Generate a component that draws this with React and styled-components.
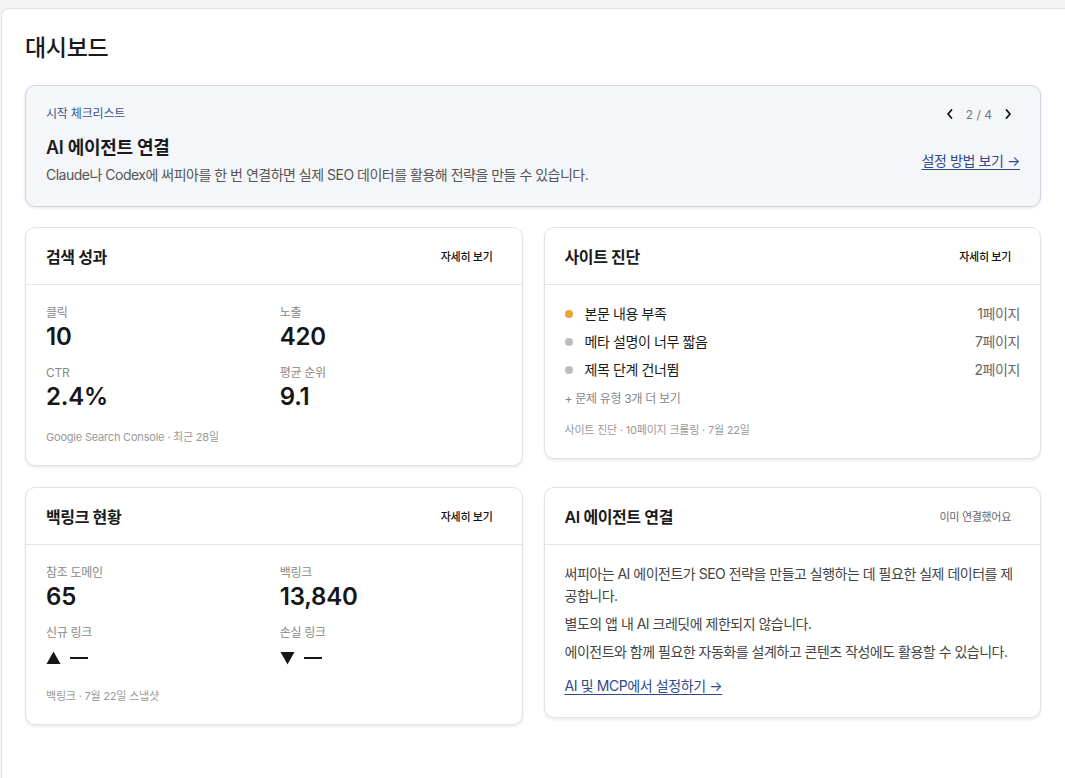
import React from "react";
import styled, { createGlobalStyle } from "styled-components";

const Global = createGlobalStyle`
  html, body { margin: 0; padding: 0; background: #f3f3f3; }
  body { font-family: "Inter", "Noto Sans CJK KR", sans-serif; color: #1a1a1a; -webkit-font-smoothing: antialiased; }
  * { box-sizing: border-box; }
`;

const Page = styled.div`
  padding-top: 8px;
  padding-left: 1px;
  height: 778px;
  overflow: hidden;
`;

const Panel = styled.main`
  background: #fff;
  border: 1px solid #e3e3e3;
  border-right: none;
  border-radius: 8px 0 0 0;
  min-height: 780px;
  padding: 24px 24px 24px 23px;
`;

const Heading = styled.h1`
  margin: 0 0 22px;
  font-size: 23px;
  line-height: 30px;
  font-weight: 500;
  letter-spacing: -0.3px;
`;

const Banner = styled.section`
  background: #f4f6fa;
  border: 1px solid #cdd4e2;
  border-radius: 10px;
  box-shadow: 0 1px 3px rgba(30, 40, 70, 0.12);
  padding: 20px 20px 21px 20px;
  display: flex;
  flex-direction: column;
  gap: 14px;
  margin-bottom: 20px;
`;

const BannerTop = styled.div`
  display: flex;
  justify-content: space-between;
  align-items: center;
  height: 16px;
`;

const Eyebrow = styled.span`
  font-size: 12px;
  line-height: 16px;
  color: #3a5693;
  letter-spacing: -0.2px;
`;

const Pager = styled.div`
  display: flex;
  align-items: center;
  gap: 4px;
  font-size: 12px;
  color: #777;
`;

const PagerBtn = styled.button`
  border: none;
  background: none;
  padding: 0;
  width: 24px;
  height: 24px;
  display: flex;
  align-items: center;
  justify-content: center;
  color: #111;
  cursor: pointer;
`;

const BannerBody = styled.div`
  display: flex;
  justify-content: space-between;
  align-items: center;
`;

const BannerTitle = styled.h2`
  margin: 0 0 5px;
  font-size: 18px;
  line-height: 24px;
  font-weight: 600;
  letter-spacing: -0.3px;
`;

const BannerText = styled.p`
  margin: 0;
  font-size: 14px;
  line-height: 20px;
  color: #555;
  letter-spacing: -0.5px;
`;

const LinkText = styled.a`
  font-size: 14px;
  line-height: 20px;
  color: #2c4a8c;
  text-decoration: underline;
  text-underline-offset: 3px;
  letter-spacing: -0.4px;
  cursor: pointer;
  white-space: nowrap;
`;

const Grid = styled.div`
  display: grid;
  grid-template-columns: 1fr 1fr;
  gap: 21px 21px;
  align-items: start;
`;

const Card = styled.section`
  background: #fff;
  border: 1px solid #e2e2e2;
  border-radius: 10px;
  box-shadow: 0 2px 3px rgba(0, 0, 0, 0.08);
`;

const CardHeader = styled.header`
  display: flex;
  align-items: center;
  justify-content: space-between;
  height: 57px;
  padding: 0 20px;
  border-bottom: 1px solid #e4e4e4;
`;

const CardTitle = styled.h3`
  margin: 0;
  font-size: 16px;
  font-weight: 600;
  letter-spacing: -0.4px;
`;

const HeaderButton = styled.button`
  border: none;
  background: none;
  padding: 6px 9px;
  font-family: inherit;
  font-size: 11px;
  font-weight: ${(p) => (p.$muted ? 400 : 500)};
  color: ${(p) => (p.$muted ? "#666" : "#111")};
  letter-spacing: -0.3px;
  cursor: pointer;
`;

const CardBody = styled.div`
  padding: ${(p) => p.$pad || "20px 20px 20px"};
`;

const Stats = styled.div`
  display: grid;
  grid-template-columns: 1fr 1fr;
  row-gap: 12px;
  column-gap: 12px;
`;

const Stat = styled.div`
  display: flex;
  flex-direction: column;
`;

const StatLabel = styled.span`
  font-size: 12px;
  line-height: 16px;
  color: #888;
  letter-spacing: -0.3px;
`;

const StatValue = styled.span`
  font-size: 24px;
  line-height: 32px;
  font-weight: 600;
  color: #161616;
  letter-spacing: -0.2px;
  display: flex;
  align-items: center;
  gap: 9px;
  height: ${(p) => (p.$tall ? "34px" : "32px")};
`;

const Footnote = styled.p`
  margin: ${(p) => p.$mt || "16px"} 0 0;
  font-size: 11px;
  line-height: 16px;
  color: #999;
  letter-spacing: -0.2px;
`;

const IssueList = styled.ul`
  list-style: none;
  margin: 0;
  padding: 0;
  display: flex;
  flex-direction: column;
  gap: 8px;
`;

const Issue = styled.li`
  display: flex;
  align-items: center;
  font-size: 14px;
  line-height: 20px;
  letter-spacing: -0.4px;
`;

const Dot = styled.span`
  width: 8px;
  height: 8px;
  border-radius: 50%;
  background: ${(p) => p.$color};
  margin-right: 12px;
  flex: none;
`;

const IssueName = styled.span`
  flex: 1;
  color: #1a1a1a;
`;

const IssueCount = styled.span`
  color: #666;
`;

const MoreLink = styled.div`
  margin-top: 11px;
  font-size: 12px;
  line-height: 16px;
  color: #888;
  letter-spacing: -0.3px;
`;

const Para = styled.p`
  margin: 0 0 6px;
  font-size: 14px;
  line-height: 22px;
  color: #444;
  letter-spacing: -0.5px;
`;

const BodyLink = styled(LinkText)`
  display: inline-block;
  margin-top: 7px;
`;

const Triangle = ({ down }) => (
  <svg width="15" height="14" viewBox="0 0 15 14">
    {down ? (
      <path d="M0.5 1 H14.5 L7.5 13.5 Z" fill="#161616" />
    ) : (
      <path d="M7.5 0.5 L14.5 13 H0.5 Z" fill="#161616" />
    )}
  </svg>
);

const Dash = styled.span`
  display: inline-block;
  width: 18px;
  height: 2.5px;
  background: #161616;
`;

const Chevron = ({ left }) => (
  <svg width="12" height="12" viewBox="0 0 12 12" fill="none">
    <path
      d={left ? "M7.5 2 L4 6 L7.5 10" : "M4.5 2 L8 6 L4.5 10"}
      stroke="#111"
      strokeWidth="1.8"
      strokeLinecap="round"
      strokeLinejoin="round"
    />
  </svg>
);

export default function App() {
  return (
    <>
      <Global />
      <Page>
        <Panel>
          <Heading>대시보드</Heading>
          <Banner>
            <BannerTop>
              <Eyebrow>시작 체크리스트</Eyebrow>
              <Pager>
                <PagerBtn aria-label="이전">
                  <Chevron left />
                </PagerBtn>
                <span>2 / 4</span>
                <PagerBtn aria-label="다음">
                  <Chevron />
                </PagerBtn>
              </Pager>
            </BannerTop>
            <BannerBody>
              <div>
                <BannerTitle>AI 에이전트 연결</BannerTitle>
                <BannerText>
                  Claude나 Codex에 써피아를 한 번 연결하면 실제 SEO 데이터를 활용해 전략을 만들 수 있습니다.
                </BannerText>
              </div>
              <LinkText>설정 방법 보기 →</LinkText>
            </BannerBody>
          </Banner>

          <Grid>
            <Card>
              <CardHeader>
                <CardTitle>검색 성과</CardTitle>
                <HeaderButton>자세히 보기</HeaderButton>
              </CardHeader>
              <CardBody>
                <Stats>
                  <Stat>
                    <StatLabel>클릭</StatLabel>
                    <StatValue>10</StatValue>
                  </Stat>
                  <Stat>
                    <StatLabel>노출</StatLabel>
                    <StatValue>420</StatValue>
                  </Stat>
                  <Stat>
                    <StatLabel>CTR</StatLabel>
                    <StatValue>2.4%</StatValue>
                  </Stat>
                  <Stat>
                    <StatLabel>평균 순위</StatLabel>
                    <StatValue>9.1</StatValue>
                  </Stat>
                </Stats>
                <Footnote>Google Search Console · 최근 28일</Footnote>
              </CardBody>
            </Card>

            <Card>
              <CardHeader>
                <CardTitle>사이트 진단</CardTitle>
                <HeaderButton>자세히 보기</HeaderButton>
              </CardHeader>
              <CardBody $pad="19px 20px 20px">
                <IssueList>
                  <Issue>
                    <Dot $color="#f0a23a" />
                    <IssueName>본문 내용 부족</IssueName>
                    <IssueCount>1페이지</IssueCount>
                  </Issue>
                  <Issue>
                    <Dot $color="#bdbdbd" />
                    <IssueName>메타 설명이 너무 짧음</IssueName>
                    <IssueCount>7페이지</IssueCount>
                  </Issue>
                  <Issue>
                    <Dot $color="#bdbdbd" />
                    <IssueName>제목 단계 건너뜀</IssueName>
                    <IssueCount>2페이지</IssueCount>
                  </Issue>
                </IssueList>
                <MoreLink>+ 문제 유형 3개 더 보기</MoreLink>
                <Footnote $mt="15px">사이트 진단 · 10페이지 크롤링 · 7월 22일</Footnote>
              </CardBody>
            </Card>

            <Card>
              <CardHeader>
                <CardTitle>백링크 현황</CardTitle>
                <HeaderButton>자세히 보기</HeaderButton>
              </CardHeader>
              <CardBody>
                <Stats>
                  <Stat>
                    <StatLabel>참조 도메인</StatLabel>
                    <StatValue>65</StatValue>
                  </Stat>
                  <Stat>
                    <StatLabel>백링크</StatLabel>
                    <StatValue>13,840</StatValue>
                  </Stat>
                  <Stat>
                    <StatLabel>신규 링크</StatLabel>
                    <StatValue $tall>
                      <Triangle />
                      <Dash />
                    </StatValue>
                  </Stat>
                  <Stat>
                    <StatLabel>손실 링크</StatLabel>
                    <StatValue $tall>
                      <Triangle down />
                      <Dash />
                    </StatValue>
                  </Stat>
                </Stats>
                <Footnote $mt="13px">백링크 · 7월 22일 스냅샷</Footnote>
              </CardBody>
            </Card>

            <Card>
              <CardHeader>
                <CardTitle>AI 에이전트 연결</CardTitle>
                <HeaderButton $muted>이미 연결했어요</HeaderButton>
              </CardHeader>
              <CardBody $pad="18px 20px 21px">
                <Para>
                  써피아는 AI 에이전트가 SEO 전략을 만들고 실행하는 데 필요한 실제 데이터를 제공합니다.
                </Para>
                <Para>별도의 앱 내 AI 크레딧에 제한되지 않습니다.</Para>
                <Para>
                  에이전트와 함께 필요한 자동화를 설계하고 콘텐츠 작성에도 활용할 수 있습니다.
                </Para>
                <BodyLink>AI 및 MCP에서 설정하기 →</BodyLink>
              </CardBody>
            </Card>
          </Grid>
        </Panel>
      </Page>
    </>
  );
}
